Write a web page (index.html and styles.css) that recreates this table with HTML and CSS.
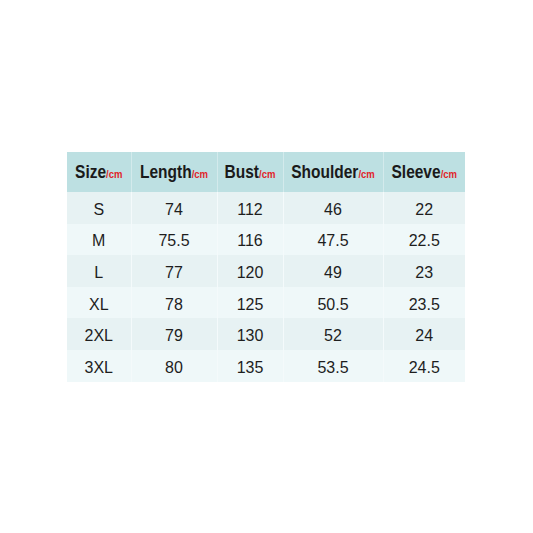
FILE: index.html
```html
<!DOCTYPE html>
<html>
<head>
<meta charset="utf-8">
<link rel="stylesheet" href="styles.css">
</head>
<body>
<div class="page">
  <table class="chart">
    <colgroup>
      <col class="c1"><col class="c2"><col class="c3"><col class="c4"><col class="c5">
    </colgroup>
    <thead>
      <tr>
        <th><span class="hd">Size<span class="unit">/cm</span></span></th>
        <th><span class="hd">Length<span class="unit">/cm</span></span></th>
        <th><span class="hd">Bust<span class="unit">/cm</span></span></th>
        <th><span class="hd">Shoulder<span class="unit">/cm</span></span></th>
        <th><span class="hd">Sleeve<span class="unit">/cm</span></span></th>
      </tr>
    </thead>
    <tbody>
      <tr><td>S</td><td>74</td><td>112</td><td>46</td><td>22</td></tr>
      <tr><td>M</td><td>75.5</td><td>116</td><td>47.5</td><td>22.5</td></tr>
      <tr><td>L</td><td>77</td><td>120</td><td>49</td><td>23</td></tr>
      <tr><td>XL</td><td>78</td><td>125</td><td>50.5</td><td>23.5</td></tr>
      <tr><td>2XL</td><td>79</td><td>130</td><td>52</td><td>24</td></tr>
      <tr><td>3XL</td><td>80</td><td>135</td><td>53.5</td><td>24.5</td></tr>
    </tbody>
  </table>
</div>
</body>
</html>
```
FILE: styles.css
```css
html, body {
  margin: 0;
  padding: 0;
  background: #ffffff;
}
.page {
  width: 533px;
  height: 533px;
  padding-top: 152px;
  padding-left: 67px;
  box-sizing: border-box;
}
.chart {
  border-collapse: collapse;
  table-layout: fixed;
  width: 398px;
  font-family: "Liberation Sans", Arial, sans-serif;
  color: #1e1e1e;
}
.c1 { width: 64px; }
.c2 { width: 86px; }
.c3 { width: 66px; }
.c4 { width: 100px; }
.c5 { width: 82px; }
.chart th {
  height: 40px;
  padding: 0;
  background: #bde0e2;
  font-size: 15.5px;
  font-weight: bold;
  text-align: center;
  border-left: 1px solid #d3eaec;
  color: #1a1a1a;
}
.hd {
  display: inline-block;
  transform: scale(1, 1.18);
}
.chart th:first-child, .chart td:first-child { border-left: none; }
.unit {
  color: #e0242a;
  font-size: 9.5px;
  font-weight: bold;
}
.chart td {
  height: 27.6px;
  padding: 4px 0 0 0;
  font-size: 16px;
  text-align: center;
  border-left: 1px solid #f4fafb;
}
.chart tbody tr:nth-child(odd) td { background: #e7f2f3; }
.chart tbody tr:nth-child(even) td { background: #eff8f9; }
```
